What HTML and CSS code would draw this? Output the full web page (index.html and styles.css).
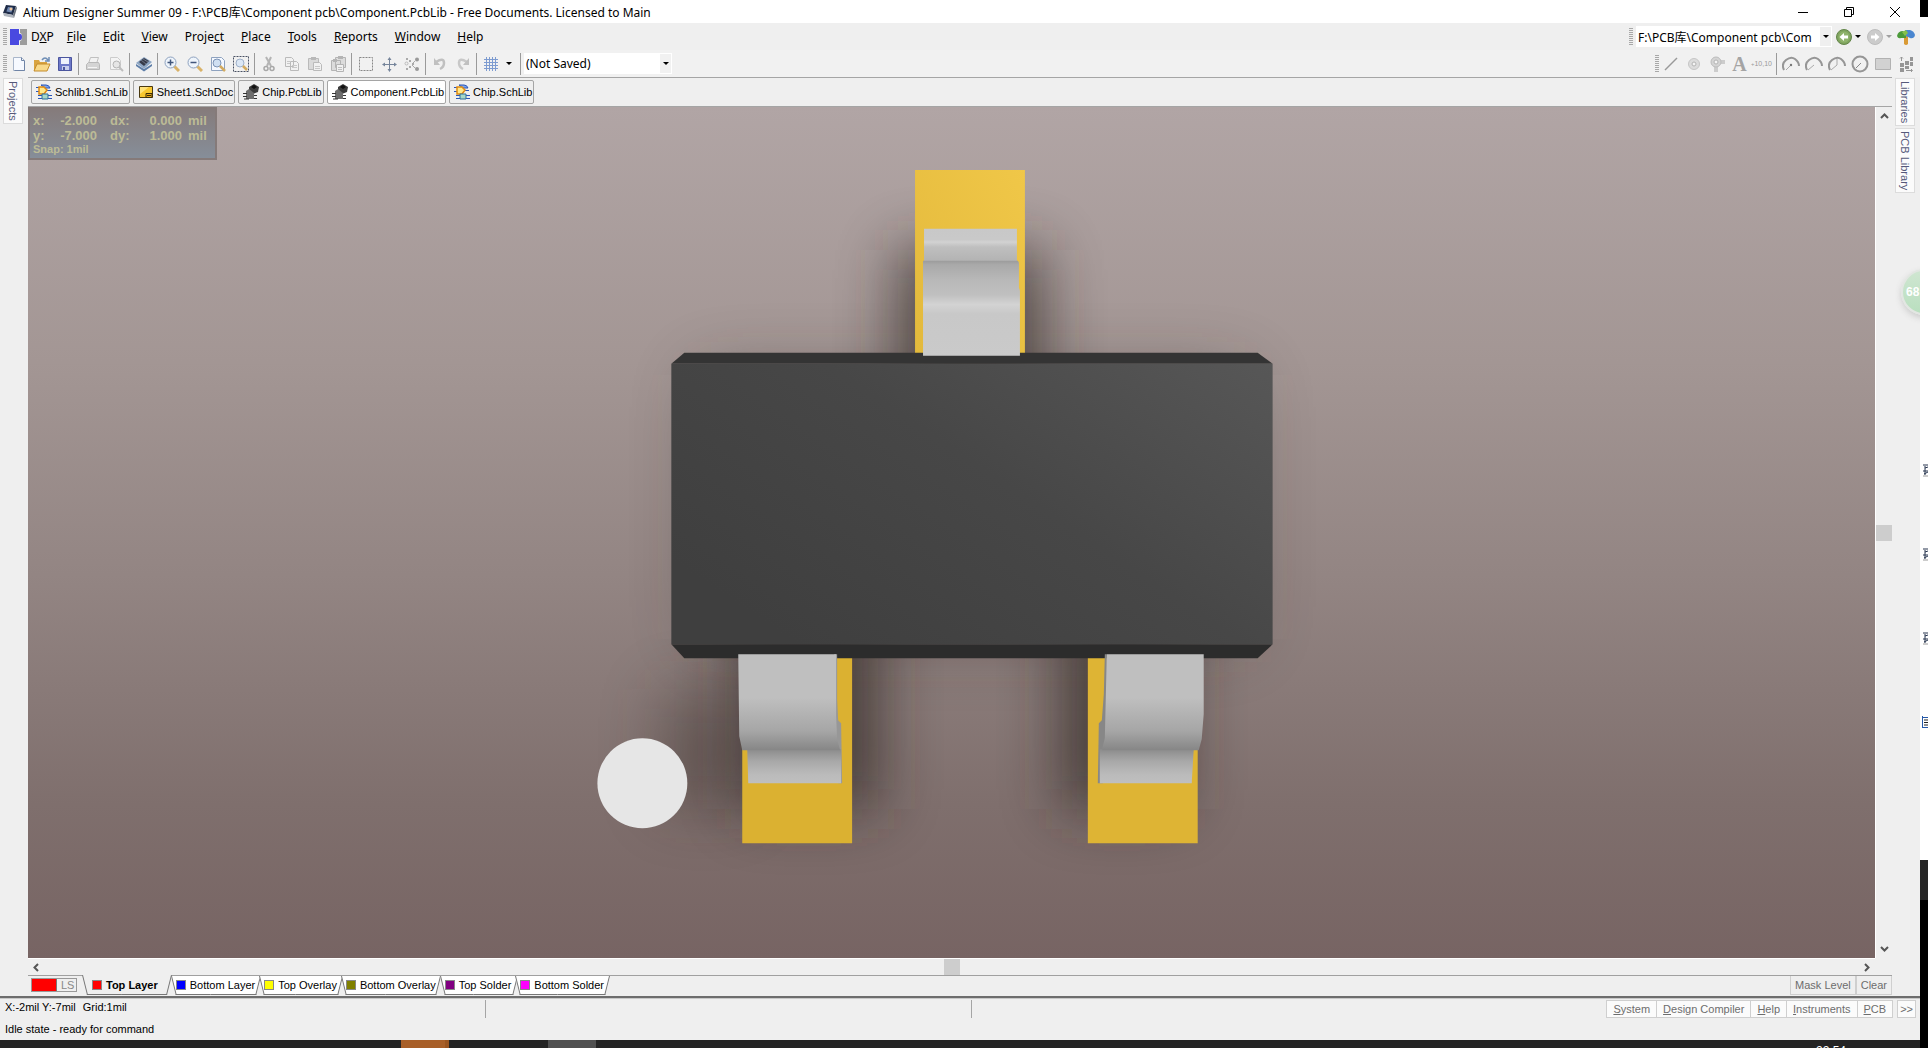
FILE: index.html
```html
<!DOCTYPE html>
<html lang="en">
<head>
  <meta charset="utf-8">
  <title>Altium Designer Summer 09</title>
  <link rel="stylesheet" href="styles.css">
</head>
<body>
  <!-- shared icons -->
  <svg class="defs" width="0" height="0">
    <symbol id="i-sch" viewBox="0 0 16 16">
      <path d="M0 3.500h5M0 7.500h5M11 6.500h4M2 11.500h5M2 14.500h5M12 11.500h4M12 14.500h4" stroke="#2a56b8" fill="none"/>
      <path d="M5 1h5q3 0 4 3h-5z" fill="#7fa6ea" stroke="#2a56b8"/>
      <path d="M3 3h5l3 3-3 4H3z" fill="#ffe98c" stroke="#e08a10" stroke-width="1.500"/>
      <path d="M6 10h6v5H6z" fill="#a5d8c8" stroke="#2f6f9a"/>
    </symbol>
    <symbol id="i-doc" viewBox="0 0 16 16">
      <path d="M1.500 2.500h13v11h-13z" fill="#f7c62f" stroke="#4a3a10"/>
      <path d="M2 3h9L2 10z" fill="#ffe27a"/>
      <path d="M8 9.500h6v4H8zM9 11.500h4" fill="#e8a81c" stroke="#3a2c08"/>
    </symbol>
    <symbol id="i-pcb" viewBox="0 0 16 16">
      <path d="M6 3l5-3 5 3-1 5-5 2-4-3z" fill="#3c3c3c"/>
      <path d="M8 3l3-2 3 2-3 2z" fill="#111"/>
      <path d="M3 7l3-2 5 4v6H3z" fill="#6d6d6d"/>
      <path d="M0 9.500h4M0 12.500h4M1 15h5M11 11.500h3M11 14.500h3" stroke="#333" fill="none"/>
    </symbol>
  </svg>

  <div class="app">
    <header class="titlebar">
      <svg class="logo" width="16" height="16" viewBox="0 0 16 16">
        <path d="M4 1l10 1-3 9-10-2z" fill="#1f2c48"/>
        <path d="M6 3l5 .6-1.600 5-5-1z" fill="#6f87b0"/>
        <circle cx="9" cy="5" r="1.500" fill="#f2c9a0"/>
        <path d="M1 9l10 2 1 3-10-2z" fill="#aeb4bd"/>
        <path d="M11 11l3-9 1 2-3 10z" fill="#6c737d"/>
      </svg>
      <h1>Altium Designer Summer 09 - F:\PCB库\Component pcb\Component.PcbLib - Free Documents. Licensed to Main</h1>
      <div class="winbtns">
        <button aria-label="Minimize"><svg width="12" height="12" viewBox="0 0 12 12"><path d="M1 6.500h10" stroke="#000"/></svg></button>
        <button aria-label="Restore"><svg width="12" height="12" viewBox="0 0 12 12"><path d="M1.500 3.500h7v7h-7zM3.500 3.500v-2h7v7h-2" fill="none" stroke="#000"/></svg></button>
        <button aria-label="Close"><svg width="12" height="12" viewBox="0 0 12 12"><path d="M1 1l10 10M11 1L1 11" stroke="#000"/></svg></button>
      </div>
    </header>

    <nav class="menubar">
      <span class="grip"></span>
      <svg class="dxp" width="17" height="16" viewBox="0 0 17 16">
        <path d="M0 0h9v16H0z" fill="#4949e0"/>
        <path d="M10 0h7v16h-7v-4q2 0 2-4t-2-4z" fill="#9c9c9c"/>
        <path d="M8 5q4-1 4 3t-4 3z" fill="#4949e0"/>
      </svg>
      <a class="first" href="#">D<u>X</u>P</a>
      <a href="#"><u>F</u>ile</a>
      <a href="#"><u>E</u>dit</a>
      <a href="#"><u>V</u>iew</a>
      <a href="#">Proje<u>c</u>t</a>
      <a href="#"><u>P</u>lace</a>
      <a href="#"><u>T</u>ools</a>
      <a href="#"><u>R</u>eports</a>
      <a href="#"><u>W</u>indow</a>
      <a href="#"><u>H</u>elp</a>
      <div class="addressbar">
        <span class="grip"></span>
        <input class="address" type="text" aria-label="Document path" value="F:\PCB库\Component pcb\Component.PcbLib">
        <button class="drop" aria-label="Path list"><i class="caret"></i></button>
        <button class="tb" aria-label="Back"><svg width="16" height="16" viewBox="0 0 16 16"><circle cx="8" cy="8" r="7.500" fill="#7fa35e" stroke="#64864a"/><circle cx="8" cy="8" r="5.500" fill="#8fb36c"/><path d="M3.500 8L8 4v2.500h4v3H8V12z" fill="#fff"/></svg></button>
        <i class="caret narrow"></i>
        <button class="tb" aria-label="Forward" disabled><svg width="16" height="16" viewBox="0 0 16 16"><circle cx="8" cy="8" r="7.500" fill="#cbcbcb" stroke="#bdbdbd"/><path d="M12.500 8L8 4v2.500H4v3h4V12z" fill="#fff"/></svg></button>
        <i class="caret narrow off"></i>
        <button class="tb" aria-label="Home"><svg width="18" height="16" viewBox="0 0 18 16"><path d="M7 5h4v10q-2 2-4 0z" fill="#d99a34"/><path d="M0 7q1-5 6-5l3 2v5H4q-3 1-4-2z" fill="#4c9a3a"/><path d="M8 1h5q4 1 5 5-1 4-5 3L9 7z" fill="#4a86d0"/><path d="M5 3l4-2 2 3-3 3z" fill="#86c04c"/></svg></button>
      </div>
    </nav>

    <div class="toolbar">
      <span class="grip"></span>
      <button class="tb" aria-label="New"><svg width="16" height="16" viewBox="0 0 16 16"><path d="M2.500 1.500h8l3 3v10h-11z" fill="#f6f9ff" stroke="#a9b6ca"/><path d="M10.500 1.500v3h3M13.500 5v9.500h-10" fill="none" stroke="#6f84a6"/></svg></button>
      <button class="tb" aria-label="Open"><svg width="18" height="16" viewBox="0 0 18 16"><path d="M1 4h5l1 2h7v9H1z" fill="#d9a441"/><path d="M4 8h13l-3 7H1z" fill="#f8d98a" stroke="#c48c2c"/><path d="M9 4q3-4 6 0m1-3v4h-4" fill="none" stroke="#6e8db5" stroke-width="1.500"/></svg></button>
      <button class="tb" aria-label="Save"><svg width="16" height="16" viewBox="0 0 16 16"><path d="M1.500 1.500h13v13h-13z" fill="#6d78c8" stroke="#4b559e"/><path d="M4 2h8v6H4z" fill="#eef1fb"/><path d="M5 10h7v4H5z" fill="#c7cdec"/><path d="M6 11h2v3H6z" fill="#4b559e"/></svg></button>
      <span class="sep"></span>
      <button class="tb" aria-label="Print" disabled><svg width="16" height="16" viewBox="0 0 16 16"><path d="M5.500 1.500h8l-2 6h-8z" fill="#f2f2f2" stroke="#c0c0c0"/><path d="M1.500 8.500l2-2h10l1 2v5h-13z" fill="#d4d4d4" stroke="#b8b8b8"/><path d="M3 11.500h9" stroke="#f4f4f4"/></svg></button>
      <button class="tb" aria-label="Print preview" disabled><svg width="16" height="16" viewBox="0 0 16 16"><path d="M2.500 1.500h7l3 3v9h-10z" fill="#f4f4f4" stroke="#ccc"/><circle cx="8.500" cy="8.500" r="3.500" fill="#e6e6e6" stroke="#b4b4b4"/><path d="M11 11l4 4" stroke="#bdbdbd" stroke-width="2"/></svg></button>
      <span class="sep"></span>
      <button class="tb" aria-label="Board"><svg width="16" height="16" viewBox="0 0 16 16"><path d="M0 8l8 5 8-5v2l-8 5.500L0 10z" fill="#5e7ea8"/><path d="M0 7l8-6 8 5-8 7z" fill="#8da6c4"/><path d="M3 6l5-4 5 3-5 5z" fill="#353a48"/><path d="M5 4l5 4M7 3l5 3" stroke="#6c7486"/></svg></button>
      <span class="sep"></span>
      <button class="tb" aria-label="Zoom in"><svg width="16" height="16" viewBox="0 0 16 16"><path d="M10 10l5 5" stroke="#d9b268" stroke-width="3"/><circle cx="6.500" cy="6.500" r="5.500" fill="#eef4fb" stroke="#8ea2bf"/><path d="M3.500 6.500h6M6.500 3.500v6" stroke="#40557b" stroke-width="1.500"/></svg></button>
      <button class="tb" aria-label="Zoom out"><svg width="16" height="16" viewBox="0 0 16 16"><path d="M10 10l5 5" stroke="#d9b268" stroke-width="3"/><circle cx="6.500" cy="6.500" r="5.500" fill="#eef4fb" stroke="#8ea2bf"/><path d="M3.500 6.500h6" stroke="#40557b" stroke-width="1.500"/></svg></button>
      <button class="tb" aria-label="Zoom document"><svg width="16" height="16" viewBox="0 0 16 16"><path d="M1.500 1.500h10l3 3v10h-13z" fill="#f4f8ff" stroke="#8ea2bf"/><circle cx="7" cy="7" r="4" fill="#cfdff2" stroke="#7c93b5"/><path d="M10 10l5 5" stroke="#d3ab60" stroke-width="2.500"/></svg></button>
      <button class="tb" aria-label="Zoom area"><svg width="16" height="16" viewBox="0 0 16 16"><path d="M.5.5h15v15H.5z" fill="none" stroke="#4a5264" stroke-dasharray="2 1"/><circle cx="7" cy="7" r="4" fill="#dbe7f5" stroke="#9fb0c9"/><path d="M10 10l4 4" stroke="#d3ab60" stroke-width="2.500"/></svg></button>
      <span class="sep"></span>
      <button class="tb" aria-label="Cut" disabled><svg width="16" height="16" viewBox="0 0 16 16"><path d="M5 1l5 9M10 1L6 10" stroke="#b4b4b4" stroke-width="2"/><circle cx="5" cy="12.500" r="2" fill="none" stroke="#a8a8a8" stroke-width="1.500"/><circle cx="11" cy="12.500" r="2" fill="none" stroke="#a8a8a8" stroke-width="1.500"/></svg></button>
      <button class="tb" aria-label="Copy" disabled><svg width="16" height="16" viewBox="0 0 16 16"><path d="M1.500 1.500h6l2 2v7h-8zM6.500 5.500h6l2 2v7h-8z" fill="#f1f1f1" stroke="#bababa"/><path d="M3 5.500h3M3 7.500h3M8 9.500h5M8 11.500h5" stroke="#c8c8c8"/></svg></button>
      <button class="tb" aria-label="Paste" disabled><svg width="16" height="16" viewBox="0 0 16 16"><path d="M1.500 2.500h10v11h-10z" fill="#dadada" stroke="#bababa"/><path d="M4 1h5v3H4z" fill="#b8b8b8"/><path d="M6.500 6.500h6l2 2v6h-8z" fill="#f1f1f1" stroke="#bababa"/><path d="M8 10.500h5M8 12.500h5" stroke="#c8c8c8"/></svg></button>
      <button class="tb" aria-label="Rubber stamp" disabled><svg width="16" height="16" viewBox="0 0 16 16"><path d="M5.500 1.500h10v10h-10zM1.500 4.500h9v10h-9z" fill="#dcdcdc" stroke="#b4b4b4"/><path d="M8 0h5v3H8zM3 3h4v3H3z" fill="#b4b4b4"/><path d="M6.500 8.500h7v7h-7z" fill="#f1f1f1" stroke="#b4b4b4"/><path d="M8 11.500h4M8 13.500h4" stroke="#c0c0c0"/></svg></button>
      <span class="sep"></span>
      <button class="tb" aria-label="Select"><svg width="16" height="16" viewBox="0 0 16 16"><path d="M1.500 1.500h13v13h-13z" fill="none" stroke="#888" stroke-dasharray="2 1"/></svg></button>
      <button class="tb" aria-label="Move"><svg width="16" height="16" viewBox="0 0 16 16"><path d="M8.500 2v12M2 8.500h12" stroke="#76859b"/><path d="M8.500 1l2 3h-4zM8.500 16l-2-3h4zM1 8.500l3-2v4zM16 8.500l-3-2v4z" fill="#76859b"/></svg></button>
      <button class="tb" aria-label="Deselect" disabled><svg width="16" height="16" viewBox="0 0 16 16"><path d="M2 2h2v2H2zM5 4h2v2H5zM8 7h2v2H8zM5 10h2v2H5zM2 12h2v2H2z" fill="#aaa"/><circle cx="2.500" cy="7.500" r="1.500" fill="none" stroke="#bbb"/><path d="M8 8l3-3M8 9l3 3" stroke="#aaa"/><circle cx="13" cy="3.500" r="2" fill="#999"/><circle cx="13" cy="13" r="2" fill="#999"/></svg></button>
      <span class="sep"></span>
      <button class="tb" aria-label="Undo" disabled><svg width="16" height="16" viewBox="0 0 16 16"><path d="M4 6q8-5 8 1 0 4-4 6" fill="none" stroke="#c0c0c0" stroke-width="2.500"/><path d="M2 2v7h6z" fill="#c0c0c0"/></svg></button>
      <button class="tb" aria-label="Redo" disabled><svg width="16" height="16" viewBox="0 0 16 16"><path d="M12 6Q4 1 4 7q0 4 4 6" fill="none" stroke="#c8c8c8" stroke-width="2.500"/><path d="M14 2v7H8z" fill="#c0c0c0"/></svg></button>
      <span class="sep"></span>
      <button class="tb" aria-label="Grid"><svg width="16" height="16" viewBox="0 0 16 16"><path d="M1 3.500h14M1 6.500h14M1 9.500h14M1 12.500h14M3.500 1v14M6.500 1v14M9.500 1v14M12.500 1v14" stroke="#7d9bd0"/></svg></button>
      <i class="caret spaced"></i>
      <span class="sep"></span>
      <input class="saved" type="text" aria-label="View configuration" value="(Not Saved)">
      <button class="drop" aria-label="View configurations"><i class="caret"></i></button>

      <div class="placebar">
        <span class="grip"></span>
        <button class="tb" aria-label="Place line"><svg width="16" height="16" viewBox="0 0 16 16"><path d="M2 14L14 2" stroke="#999" stroke-width="1.500"/></svg></button>
        <button class="tb" aria-label="Place pad"><svg width="16" height="16" viewBox="0 0 16 16"><circle cx="8" cy="8" r="5.500" fill="#dcdcdc" stroke="#c6c6c6"/><circle cx="8" cy="8" r="2" fill="#f4f4f4" stroke="#b4b4b4"/></svg></button>
        <button class="tb" aria-label="Place via"><svg width="16" height="16" viewBox="0 0 16 16"><path d="M5 8h4v8H5zM9 4h7v4H9z" fill="#ccc"/><circle cx="7" cy="6" r="5" fill="#d4d4d4" stroke="#bcbcbc"/><circle cx="7" cy="6" r="2" fill="#f4f4f4" stroke="#b4b4b4"/></svg></button>
        <button class="tb letter" aria-label="Place string">A</button>
        <button class="tb coord" aria-label="Place coordinate"><sub>+</sub>10,10</button>
        <span class="sep"></span>
        <button class="tb" aria-label="Arc by center"><svg width="18" height="16" viewBox="0 0 18 16"><path d="M2 14Q-1 8 4 4t9-1q4 3 4 7" fill="none" stroke="#969696" stroke-width="2"/><path d="M4 14l5-5" stroke="#aaa"/><circle cx="9" cy="9" r="1.200" fill="#777"/></svg></button>
        <button class="tb" aria-label="Arc by edge"><svg width="18" height="16" viewBox="0 0 18 16"><path d="M2 14Q-1 8 4 4t9-1q4 3 4 7" fill="none" stroke="#969696" stroke-width="2"/><path d="M3 14l6-5" stroke="#aaa"/></svg></button>
        <button class="tb" aria-label="Arc any angle"><svg width="18" height="16" viewBox="0 0 18 16"><path d="M2 14Q-1 8 4 4t9-1q4 3 4 7" fill="none" stroke="#969696" stroke-width="2"/><path d="M3 14l6-5V3" fill="none" stroke="#aaa"/></svg></button>
        <button class="tb" aria-label="Full circle"><svg width="18" height="18" viewBox="0 0 18 18"><circle cx="9" cy="9" r="7.500" fill="none" stroke="#969696" stroke-width="2"/><path d="M5 13l5-5" stroke="#888"/></svg></button>
        <button class="tb" aria-label="Place fill"><svg width="16" height="16" viewBox="0 0 16 16"><path d="M.5 2.500h15v11H.5z" fill="#d2d2d2" stroke="#b2b2b2"/></svg></button>
        <button class="tb" aria-label="Array paste"><svg width="16" height="16" viewBox="0 0 16 16"><path d="M2 7h4v4H2zM2 12h4v4H2zM7 5h4v4H7zM7 10h4v3H7zM12 1h3v4h-3zM12 6h3v4h-3z" fill="#969696"/><path d="M3.500 5V1M2 2.500L3.500 1 5 2.500M8 14.500h6M13 13l1.500 1.500L13 16" fill="none" stroke="#969696"/></svg></button>
      </div>
    </div>

    <div class="middle">
      <aside class="dock left"><button>Projects</button></aside>

      <main class="editor">
        <div class="doctabs">
          <button><svg width="16" height="16"><use href="#i-sch"/></svg>Schlib1.SchLib</button>
          <button><svg width="16" height="16"><use href="#i-doc"/></svg>Sheet1.SchDoc</button>
          <button><svg width="16" height="16"><use href="#i-pcb"/></svg>Chip.PcbLib</button>
          <button class="active"><svg width="16" height="16"><use href="#i-pcb"/></svg>Component.PcbLib</button>
          <button><svg width="16" height="16"><use href="#i-sch"/></svg>Chip.SchLib</button>
        </div>

        <div class="view">
          <div class="canvas">
            <!-- SOT-23 package, 3D view -->
            <svg class="board" viewBox="28 107 1847 852" preserveAspectRatio="xMidYMid meet">
              <defs>
                <linearGradient id="body" x1="0" y1=".7" x2="1" y2="0"><stop offset="0" stop-color="#3f3f3f"/><stop offset=".5" stop-color="#474747"/><stop offset="1" stop-color="#575757"/></linearGradient>
                <linearGradient id="goldTop" x1="0" y1="1" x2="1" y2="0"><stop offset="0" stop-color="#e3b93c"/><stop offset="1" stop-color="#f0c748"/></linearGradient>
                <linearGradient id="footTop" x1="0" y1="0" x2="0" y2="1"><stop offset="0" stop-color="#c8c8c8"/><stop offset=".32" stop-color="#c9c9c9"/><stop offset=".4" stop-color="#d2d2d2"/><stop offset=".55" stop-color="#bfbfbf"/><stop offset="1" stop-color="#b2b2b2"/></linearGradient>
                <linearGradient id="legTop" x1="0" y1="0" x2="0" y2="1"><stop offset="0" stop-color="#9c9c9c"/><stop offset=".04" stop-color="#a9a9a9"/><stop offset=".2" stop-color="#b8b8b8"/><stop offset=".36" stop-color="#c0c0c0"/><stop offset=".46" stop-color="#d3d3d3"/><stop offset=".56" stop-color="#c8c8c8"/><stop offset="1" stop-color="#cacaca"/></linearGradient>
                <linearGradient id="legLow" x1="0" y1="0" x2="0" y2="1"><stop offset="0" stop-color="#bfbfbf"/><stop offset=".45" stop-color="#bfbfbf"/><stop offset=".8" stop-color="#a6a6a6"/><stop offset="1" stop-color="#868686"/></linearGradient>
                <linearGradient id="footLow" x1="0" y1="0" x2="0" y2="1"><stop offset="0" stop-color="#8c8c8c"/><stop offset=".35" stop-color="#a8a8a8"/><stop offset=".75" stop-color="#bbbbbb"/><stop offset="1" stop-color="#bfbfbf"/></linearGradient>
                <filter id="soft" x="-150%" y="-100%" width="400%" height="300%"><feGaussianBlur stdDeviation="30"/></filter>
                <filter id="wide" x="-50%" y="-50%" width="200%" height="200%"><feGaussianBlur stdDeviation="34"/></filter>
              </defs>
              <g fill="#2e2524">
                <path d="M700 375h545v265H700z" filter="url(#wide)" opacity=".4"/>
                <path d="M898 250h144v180H898z" filter="url(#soft)" opacity=".7"/>
                <path d="M740 610h138v200H740z" filter="url(#soft)" opacity=".7"/>
                <path d="M1062 610h120v200h-120z" filter="url(#soft)" opacity=".7"/>
                <path d="M660 690h90v120h-90z" filter="url(#soft)" opacity=".35"/>
              </g>
              <circle cx="642" cy="784" r="45" fill="#e6e6e6"/>
              <path d="M915 170h110v184H915z" fill="url(#goldTop)"/>
              <path d="M742 655h110v189H742z" fill="#dbb131"/>
              <path d="M1088 655h110v189h-110z" fill="#deb434"/>
              <path d="M684 353h574l15 11H671z" fill="#343434"/>
              <path d="M671 645h602l-15 14H684z" fill="#2c2c2c"/>
              <path d="M671 364h602v281H671z" fill="url(#body)"/>
              <path d="M924 229h93v33h-93z" fill="url(#footTop)"/>
              <path d="M923 261h95l1 2v25l1 3v65h-97z" fill="url(#legTop)"/>
              <path d="M834 655h3v45l1 21 3 3 1 60h-4l-3-36z" fill="#979797"/>
              <path d="M747 750h94v34h-93z" fill="url(#footLow)"/>
              <path d="M738 655h98v62l1 23 3 11h-98l-3-14z" fill="url(#legLow)"/>
              <path d="M1107 655h-2l-1 40-2 26-3 3-1 60h5l5-36z" fill="#878787"/>
              <path d="M1100 750h94l-2 34h-92z" fill="url(#footLow)"/>
              <path d="M1107 655h97v60l-2 25-3 11h-97l3-12z" fill="url(#legLow)"/>
            </svg>
            <div class="hud">
              <span>x:</span><b>-2.000</b><span>dx:</span><b>0.000</b><span>mil</span>
              <span>y:</span><b>-7.000</b><span>dy:</span><b>1.000</b><span>mil</span>
              <small>Snap: 1mil</small>
            </div>
          </div>
          <div class="vscroll">
            <button aria-label="Scroll up"><svg width="9" height="6" viewBox="0 0 9 6"><path d="M1 5l3.500-3.500L8 5"/></svg></button>
            <span class="thumb"></span>
            <button aria-label="Scroll down"><svg width="9" height="6" viewBox="0 0 9 6"><path d="M1 1l3.500 3.500L8 1"/></svg></button>
          </div>
          <div class="hscroll">
            <button aria-label="Scroll left"><svg width="6" height="9" viewBox="0 0 6 9"><path d="M5 1L1.500 4.500 5 8"/></svg></button>
            <span class="thumb"></span>
            <button aria-label="Scroll right"><svg width="6" height="9" viewBox="0 0 6 9"><path d="M1 1l3.500 3.500L1 8"/></svg></button>
          </div>
        </div>

        <div class="layers">
          <button class="ls"><i class="red"></i>LS</button>
          <button class="layer active"><i class="red"></i>Top Layer</button>
          <button class="layer"><i class="blue"></i>Bottom Layer</button>
          <button class="layer"><i class="yellow"></i>Top Overlay</button>
          <button class="layer"><i class="olive"></i>Bottom Overlay</button>
          <button class="layer"><i class="purple"></i>Top Solder</button>
          <button class="layer"><i class="magenta"></i>Bottom Solder</button>
          <div class="mask">
            <button>Mask Level</button>
            <button>Clear</button>
          </div>
        </div>
      </main>

      <aside class="dock right">
        <button>Libraries</button>
        <button>PCB Library</button>
        <span class="bubble">68</span>
      </aside>
    </div>

    <footer class="status">
      <div class="statusrow">
        <p class="cell">X:-2mil Y:-7mil <span>Grid:1mil</span></p>
        <p class="cell"></p>
        <div class="panels">
          <button><u>S</u>ystem</button>
          <button><u>D</u>esign Compiler</button>
          <button><u>H</u>elp</button>
          <button><u>I</u>nstruments</button>
          <button><u>P</u>CB</button>
          <button class="more">&gt;&gt;</button>
        </div>
      </div>
      <p class="idle">Idle state - ready for command</p>
    </footer>
  </div>

  <!-- strip of desktop visible beside the window -->
  <div class="desktop">
    <svg viewBox="0 0 8 14"><path d="M3 2h5M5 5l3-1M3 8h5M4 11l4-2M5 3v9" stroke="#26344f" fill="none"/><path d="M3 13h5" stroke="#999"/></svg>
    <svg viewBox="0 0 8 14"><path d="M3 2h5M5 5l3-1M3 8h5M4 11l4-2M5 3v9" stroke="#26344f" fill="none"/><path d="M3 13h5" stroke="#999"/></svg>
    <svg viewBox="0 0 8 14"><path d="M3 2h5M5 5l3-1M3 8h5M4 11l4-2M5 3v9" stroke="#26344f" fill="none"/><path d="M3 13h5" stroke="#999"/></svg>
    <svg viewBox="0 0 8 14"><path d="M2.500 1v12M3 2.500h5M3 12.500h5" stroke="#2458a8" fill="none"/><path d="M4 5h4M4 7.500h4M4 10h4" stroke="#222"/></svg>
  </div>

  <div class="taskbar">
    <span class="task orange"></span>
    <span class="task grey"></span>
    <time>22:54</time>
  </div>
</body>
</html>
```
FILE: styles.css
```css
* {
  box-sizing: border-box;
}

body {
  margin: 0;
  height: 100vh;
  display: grid;
  grid-template-columns: 1fr 8px;
  grid-template-rows: minmax(0, 1fr) 8px;
  overflow: hidden;
  background: #000;
  color: #000;
  font-family: "Liberation Sans", Arial, sans-serif;
  font-size: 11px;
}

p, h1 {
  margin: 0;
}

button {
  padding: 0;
  border: none;
  background: none;
  color: inherit;
  font: inherit;
  white-space: nowrap;
}

.defs {
  position: absolute;
}

.app {
  display: flex;
  flex-direction: column;
  min-width: 0;
  background: #efefef;
  overflow: hidden;
}

/* title bar */
.titlebar {
  display: flex;
  align-items: center;
  height: 23px;
  padding-left: 2px;
  background: #fff;
}

.titlebar h1 {
  margin-left: 5px;
  font-family: "Noto Sans", "Noto Sans CJK SC", sans-serif;
  font-size: 12px;
  font-weight: normal;
  white-space: nowrap;
}

.winbtns {
  display: flex;
  height: 20px;
  margin-left: auto;
  margin-right: 2px;
}

.winbtns button {
  display: grid;
  place-items: center;
  width: 46px;
}

/* menu and toolbars */
.menubar,
.toolbar {
  display: flex;
  align-items: center;
  height: 27px;
  padding-left: 3px;
  background: #f1f1f1;
}

.menubar {
  background: #efefef;
  font-family: "Noto Sans", "Noto Sans CJK SC", sans-serif;
  font-size: 12px;
}

.menubar a {
  margin-right: 17px;
  color: #000;
  text-decoration: none;
}

.menubar .first {
  margin-right: 13px;
}

.dxp {
  margin: 0 4px 0 3px;
}

.grip {
  width: 4px;
  height: 17px;
  background: repeating-linear-gradient(#a8a8a8 0 1px, transparent 1px 2px);
}

.addressbar,
.placebar {
  display: flex;
  align-items: center;
  margin-left: auto;
  margin-right: 3px;
}

.tb {
  display: grid;
  place-items: center;
  width: 23px;
  height: 22px;
}

.sep {
  width: 1px;
  height: 22px;
  margin: 0 2px;
  background: #9a9a9a;
}

.caret {
  border: 3px solid transparent;
  border-top-color: #000;
  border-bottom: 0;
}

.caret.narrow {
  margin-right: 2px;
}

.caret.spaced {
  margin: 0 6px 0 4px;
}

.caret.off {
  border-top-color: #a0a0a0;
}

.address,
.saved {
  height: 21px;
  padding: 0 2px;
  border: none;
  background: #fff;
  font-family: "Noto Sans", "Noto Sans CJK SC", sans-serif;
  font-size: 12px;
}

.address {
  width: 184px;
  margin-left: 3px;
  padding-right: 8px;
}

.saved {
  width: 136px;
  margin-left: 1px;
}

.drop {
  display: grid;
  place-items: center;
  width: 12px;
  height: 21px;
  border: 1px solid #fff;
  border-left: 0;
}

.letter {
  color: #a4a4a4;
  font-family: "Liberation Serif", serif;
  font-size: 20px;
  font-weight: bold;
}

.coord {
  display: flex;
  align-items: center;
  color: #999;
  font-size: 7px;
}

/* docks */
.middle {
  flex: 1;
  display: flex;
  min-height: 0;
}

.dock {
  position: relative;
  width: 28px;
  padding: 1px 3px;
}

.dock button {
  display: block;
  width: 20px;
  margin-bottom: 2px;
  padding: 2px 0;
  border: 1px solid #dcdcdc;
  background: #fbfbfb;
  color: #55597a;
  font-size: 11px;
  line-height: 18px;
  writing-mode: vertical-rl;
}

.bubble {
  position: absolute;
  top: 192px;
  left: 9px;
  width: 46px;
  height: 46px;
  padding-left: 3px;
  border: 2px solid #e2e6e2;
  border-radius: 50%;
  background: linear-gradient(#cfe6d1, #b9dfbf);
  box-shadow: 0 3px 6px #ccc;
  color: #fff;
  font-size: 12px;
  font-weight: bold;
  line-height: 42px;
}

/* editor */
.editor {
  flex: 1;
  display: flex;
  flex-direction: column;
  min-width: 0;
  border-top: 1px solid #a5a5a5;
}

.doctabs {
  display: flex;
  gap: 3px;
  padding: 2px 3px;
  border-bottom: 1px solid #a5a5a5;
}

.doctabs button {
  display: flex;
  align-items: center;
  gap: 3px;
  height: 24px;
  padding: 0 1px 0 4px;
  border: 1px solid #a5a5a5;
  border-radius: 2px;
}

.doctabs .active {
  background: #fff;
}

.view {
  flex: 1;
  display: grid;
  grid-template-columns: 1fr 17px;
  grid-template-rows: minmax(0, 1fr) 17px;
  min-height: 0;
}

.canvas {
  position: relative;
  background: linear-gradient(#b1a5a5, #a39694 30%, #938583 55%, #7f6f6d 82%, #776463);
}

.board {
  display: block;
  width: 100%;
  height: 100%;
}

.hud {
  position: absolute;
  top: 0;
  left: 0;
  display: grid;
  grid-template-columns: 18px 46px 32px 53px 28px;
  grid-template-rows: 15px 15px 11px;
  width: 189px;
  padding: 4px 3px;
  border: 2px solid #857a79;
  background: linear-gradient(#857b7b, #868e99);
  color: #bcbb96;
  font-size: 13px;
  font-weight: bold;
  line-height: 15px;
}

.hud b {
  text-align: right;
}

.hud b + span {
  padding-left: 13px;
}

.hud b + span:nth-child(5n) {
  padding-left: 6px;
}

.hud small {
  grid-column: 1 / -1;
  font-size: 11px;
  line-height: 12px;
}

.vscroll,
.hscroll {
  display: flex;
  align-items: center;
  justify-content: space-between;
}

.vscroll {
  flex-direction: column;
  padding: 6px 0;
  border-left: 1px solid #fff;
}

.hscroll {
  padding: 0 5px;
  border-top: 1px solid #fff;
}

.vscroll button,
.hscroll button {
  display: flex;
}

.vscroll path,
.hscroll path {
  fill: none;
  stroke: #555;
  stroke-width: 2;
}

.thumb {
  width: 16px;
  height: 16px;
  background: #cdcdcd;
}

/* layer tabs */
.layers {
  display: flex;
  height: 21px;
  padding-left: 3px;
  border-top: 1px solid #a0a0a0;
}

.ls {
  display: flex;
  width: 46px;
  height: 14px;
  margin: 2px 7px 0 0;
  border: 1px solid #999;
  color: #888;
  line-height: 13px;
}

.ls i {
  width: 25px;
  height: 12px;
  margin-right: 4px;
  border-right: 1px solid #777;
}

.layer {
  position: relative;
  z-index: 0;
  height: 19px;
  margin-left: -2px;
  padding: 0 6px 1px 5px;
}

/* slanted halves make the tab's trapezoid */
.layer::before,
.layer::after {
  content: "";
  position: absolute;
  z-index: -1;
  top: 0;
  bottom: 0;
  width: 50%;
  background: #fff;
  border-bottom: 1px solid #777;
}

.layer::before {
  left: 0;
  border-left: 1px solid #777;
  transform: skewX(14deg);
  transform-origin: top;
}

.layer::after {
  right: 0;
  border-right: 1px solid #777;
  transform: skewX(-14deg);
  transform-origin: top;
}

.layer.active {
  height: 20px;
  margin-top: -1px;
  padding: 0 15px 0 10px;
  font-weight: bold;
}

.layer.active::before,
.layer.active::after {
  background: #efefef;
}

.layer i {
  display: inline-block;
  width: 10px;
  height: 10px;
  margin-right: 4px;
  border: 1px solid #888;
  vertical-align: -1px;
}

.red { background: #f00; }
.blue { background: #00f; }
.yellow { background: #ff0; }
.olive { background: #808000; }
.purple { background: #800080; }
.magenta { background: #f0f; }

.mask {
  display: flex;
  height: 19px;
  margin-left: auto;
}

.mask button {
  padding: 0 4px;
  border: 1px solid #cfcfcf;
  border-top: 0;
  color: #6d6d6d;
}

/* status bar */
.status {
  height: 44px;
  border-top: 2px solid #6d6d6d;
}

.statusrow {
  display: flex;
  height: 25px;
  padding-top: 1px;
  border-top: 1px solid #c8c8c8;
}

.cell {
  width: 486px;
  height: 18px;
  padding-left: 5px;
  border-right: 1px solid #a5a5a5;
  line-height: 15px;
}

.cell span {
  margin-left: 4px;
}

.panels {
  display: flex;
  height: 18px;
  margin-left: auto;
  margin-right: 4px;
  color: #6d6d6d;
}

.panels button {
  padding: 0 6px;
  border: 1px solid #cfcfcf;
  border-left-width: 0;
  background: #fbfbfb;
}

.panels button:first-child {
  border-left-width: 1px;
}

.panels .more {
  margin-left: 4px;
  padding: 0 2px;
  border-left-width: 1px;
}

.idle {
  padding-left: 5px;
  line-height: 12px;
}

/* what shows around the window */
.desktop {
  position: relative;
  margin-top: 17px;
  background: linear-gradient(#fff 0 843px, #262626 843px 883px, #000 883px);
}

.desktop svg {
  position: absolute;
  top: 446px;
  width: 8px;
  height: 14px;
}

.desktop svg:nth-child(2) { top: 530px; }
.desktop svg:nth-child(3) { top: 614px; }
.desktop svg:nth-child(4) { top: 698px; }

.taskbar {
  display: flex;
  height: 8px;
  padding-left: 401px;
  background: #242424;
  overflow: hidden;
}

.task {
  width: 48px;
  margin-right: 99px;
}

.task.orange {
  background: #a85f28;
  border-right: 4px solid #9a5520;
}

.task.grey {
  background: #505050;
}

.taskbar time {
  margin-left: auto;
  margin-right: 74px;
  padding-top: 4px;
  color: #fff;
  font-size: 12px;
  line-height: 14px;
}
```
